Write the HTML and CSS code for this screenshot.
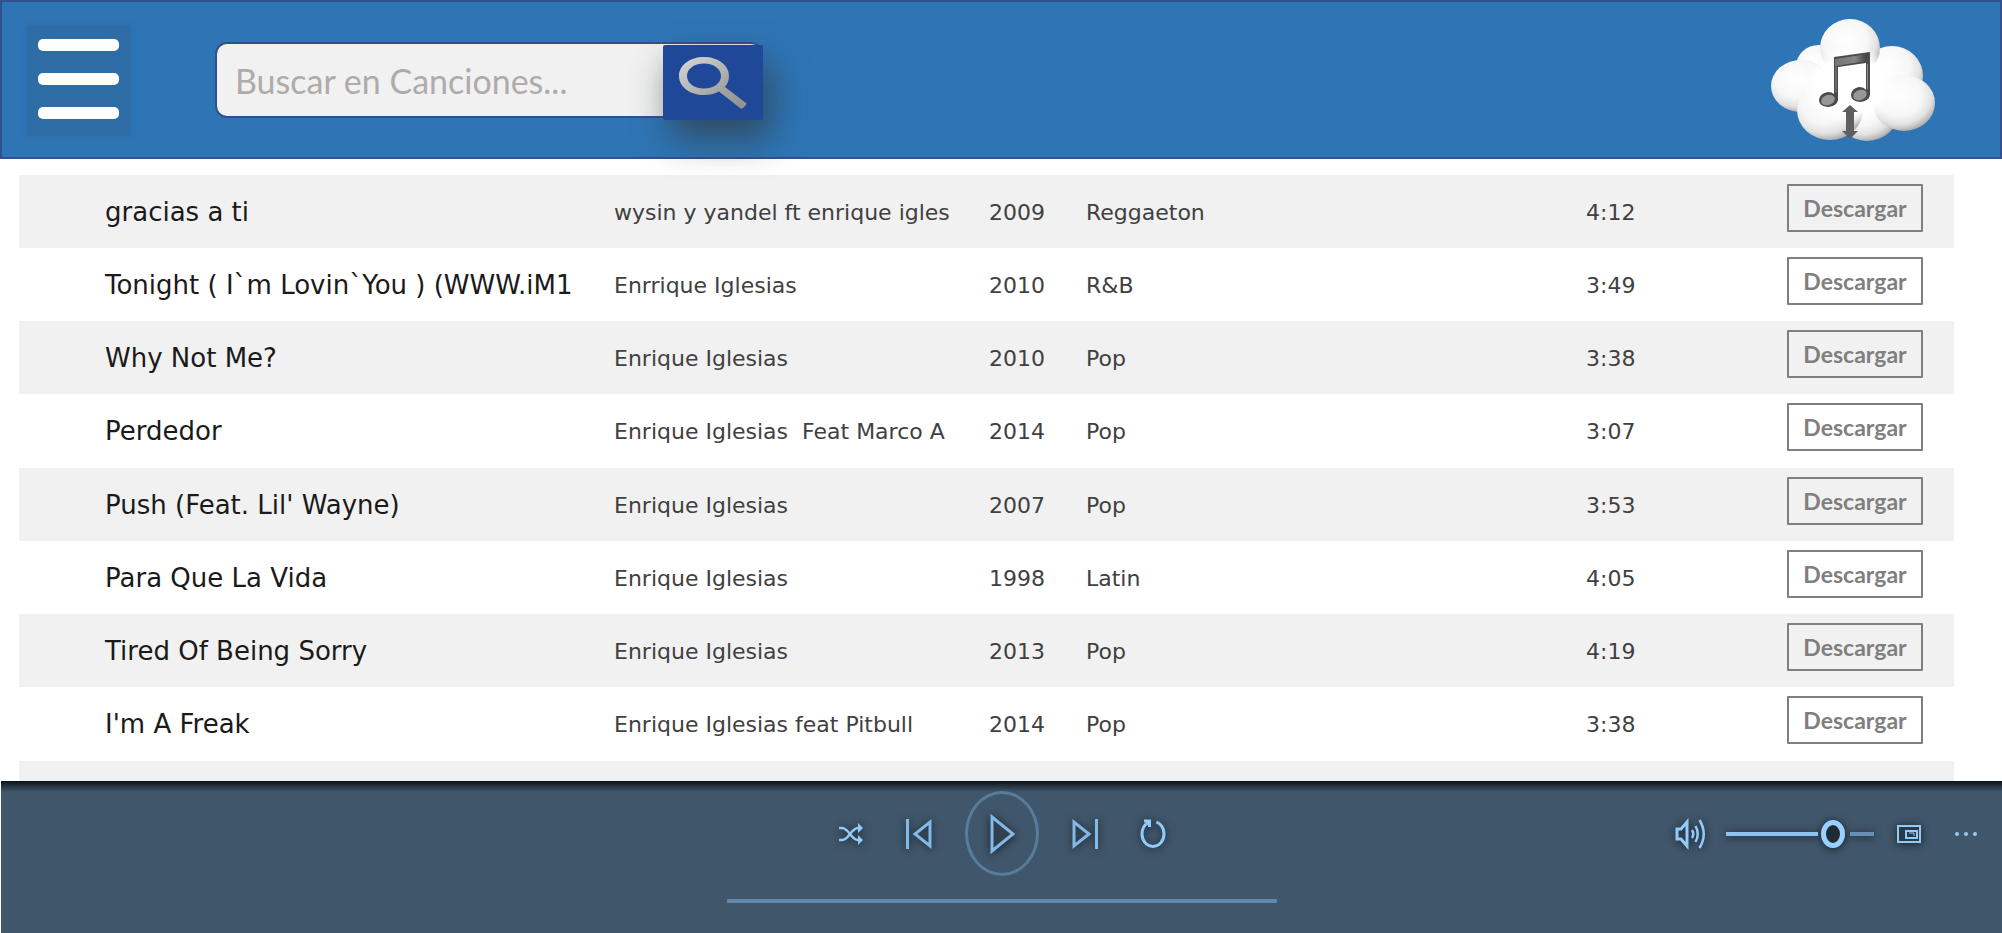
FILE: index.html
```html
<!DOCTYPE html>
<html lang="es">
<head>
<meta charset="utf-8">
<title>Canciones</title>
<link rel="stylesheet" href="styles.css">
</head>
<body>
<header class="topbar">
  <button class="menu" type="button" aria-label="Menú"><span class="bar"></span><span class="bar"></span><span class="bar"></span></button>
  <form class="search" role="search">
    <input class="search-input" type="text" placeholder="Buscar en Canciones..." aria-label="Buscar en Canciones">
    <button class="search-button" type="button" aria-label="Buscar">
      <svg width="70" height="54" viewBox="0 0 70 54">
        <defs><linearGradient id="lens" x1="0" y1="0" x2="1" y2="1"><stop offset="0" stop-color="#d8d8d8"/><stop offset=".6" stop-color="#a6a6a6"/><stop offset="1" stop-color="#8f8f8f"/></linearGradient></defs>
        <path fill="url(#lens)" fill-rule="evenodd" d="M26 1C40 1 51 9 51 20C51 24 49.500 28 47 31L68 47Q69 48 68 49L65 52Q63.500 53 62 52L41 35.500C37 38 31.500 39 26 39C12 39 1 31 1 20C1 9 12 1 26 1ZM26 7.500C16 7.500 9 13 9 20C9 27 16 32.500 26 32.500C36 32.500 43 27 43 20C43 13 36 7.500 26 7.500Z"/>
      </svg>
    </button>
  </form>
  <svg class="logo" width="166" height="124" viewBox="0 0 166 124" role="img" aria-label="Nube de música">
    <defs>
      <radialGradient id="puff" cx=".42" cy=".36" r=".66"><stop offset="0" stop-color="#fff"/><stop offset=".55" stop-color="#f7f7f7"/><stop offset=".8" stop-color="#e2e2e2"/><stop offset="1" stop-color="#aaa"/></radialGradient>
      <radialGradient id="mist"><stop offset="0" stop-color="#fff"/><stop offset=".7" stop-color="#fff"/><stop offset="1" stop-color="#fff" stop-opacity="0"/></radialGradient>
      <linearGradient id="beam" x1="0" y1="0" x2="1" y2="0"><stop offset="0" stop-color="#777"/><stop offset=".6" stop-color="#858585"/><stop offset="1" stop-color="#3c3c3c"/></linearGradient>
    </defs>
    <g fill="url(#puff)">
      <ellipse cx="49" cy="48" rx="23" ry="21"/>
      <ellipse cx="122" cy="58" rx="31" ry="30"/>
      <ellipse cx="31" cy="68" rx="30" ry="26"/>
      <ellipse cx="97" cy="95" rx="31" ry="28"/>
      <ellipse cx="60" cy="92" rx="33" ry="30"/>
      <ellipse cx="134" cy="85" rx="31" ry="28"/>
      <ellipse cx="80" cy="30" rx="30" ry="29"/>
    </g>
    <ellipse cx="80" cy="67" rx="48" ry="40" fill="url(#mist)"/>
    <path d="M64 39L100 34V76H96V45L68 49V83H64Z" fill="#4b4b4b"/>
    <path d="M65 41L98 36L96 43L65 48Z" fill="url(#beam)"/>
    <path d="M66 48V78M97.500 46V72" stroke="#8a8a8a" fill="none"/>
    <path d="M64 76L68 73V82Q67 88 58 89Q49 88 49 82Q50 75 58 74Q62 74 64 76ZM96 72L100 70V77Q99 83 90 84Q81 83 81 77Q82 70 89 69Q94 69 96 72Z" fill="#4b4b4b"/>
    <ellipse cx="58" cy="82" rx="7" ry="5" fill="#979797" transform="rotate(-20 58 82)"/>
    <ellipse cx="90" cy="77" rx="7" ry="5" fill="#979797" transform="rotate(-20 90 77)"/>
    <path d="M80 87L88 94H84V113H88L80 121L72 113H76V94H72Z" fill="#5f5f5f"/>
  </svg>
</header>
<main class="library">
  <table class="songs">
    <tbody>
      <tr><td class="title">gracias a ti</td><td>wysin y yandel ft enrique igles</td><td>2009</td><td>Reggaeton</td><td>4:12</td><td class="action"><button class="download" type="button">Descargar</button></td></tr>
      <tr><td class="title">Tonight ( I`m Lovin`You ) (WWW.iM1</td><td>Enrrique Iglesias</td><td>2010</td><td>R&amp;B</td><td>3:49</td><td class="action"><button class="download" type="button">Descargar</button></td></tr>
      <tr><td class="title">Why Not Me?</td><td>Enrique Iglesias</td><td>2010</td><td>Pop</td><td>3:38</td><td class="action"><button class="download" type="button">Descargar</button></td></tr>
      <tr><td class="title">Perdedor</td><td>Enrique Iglesias&nbsp; Feat Marco A</td><td>2014</td><td>Pop</td><td>3:07</td><td class="action"><button class="download" type="button">Descargar</button></td></tr>
      <tr><td class="title">Push (Feat. Lil' Wayne)</td><td>Enrique Iglesias</td><td>2007</td><td>Pop</td><td>3:53</td><td class="action"><button class="download" type="button">Descargar</button></td></tr>
      <tr><td class="title">Para Que La Vida</td><td>Enrique Iglesias</td><td>1998</td><td>Latin</td><td>4:05</td><td class="action"><button class="download" type="button">Descargar</button></td></tr>
      <tr><td class="title">Tired Of Being Sorry</td><td>Enrique Iglesias</td><td>2013</td><td>Pop</td><td>4:19</td><td class="action"><button class="download" type="button">Descargar</button></td></tr>
      <tr><td class="title">I'm A Freak</td><td>Enrique Iglesias feat Pitbull</td><td>2014</td><td>Pop</td><td>3:38</td><td class="action"><button class="download" type="button">Descargar</button></td></tr>
      <tr><td></td></tr>
    </tbody>
  </table>
</main>
<footer class="player">
  <div class="transport">
    <button class="control" type="button" aria-label="Aleatorio">
      <svg class="glow" width="26" height="24" viewBox="0 0 26 24" fill="none" stroke="#92cbf8" stroke-width="2.500"><path d="M1 6H4C11 6 13 18 20 18H22M1 18H4C11 18 13 6 20 6H22"/><path d="M20 1L25 6L20 11ZM20 13L25 18L20 23Z" fill="#92cbf8" stroke="none"/></svg>
    </button>
    <button class="control" type="button" aria-label="Anterior">
      <svg class="glow" width="28" height="32" viewBox="0 0 28 32" fill="none" stroke="#82b9e6" stroke-width="3"><path d="M2.500 1V31M25 4V28L10 16Z"/></svg>
    </button>
    <button class="play" type="button" aria-label="Reproducir">
      <svg class="glow" width="28" height="42" viewBox="0 0 28 42" fill="#30404e" stroke="#82b9e6" stroke-width="3"><path d="M4 4V38L25 21Z"/></svg>
    </button>
    <button class="control" type="button" aria-label="Siguiente">
      <svg class="glow" width="28" height="32" viewBox="0 0 28 32" fill="none" stroke="#82b9e6" stroke-width="3"><path d="M25.500 1V31M3 4V28L18 16Z"/></svg>
    </button>
    <button class="control" type="button" aria-label="Repetir">
      <svg class="glow" width="26" height="30" viewBox="0 0 26 30" fill="none" stroke="#92cbf8" stroke-width="3"><path d="M16.500 3C21 5 24 9 24 15C24 22 19 27.500 13 27.500S2 22 2 15C2 10 4 6 8.500 3.500M4 2H9.500V8"/></svg>
    </button>
  </div>
  <div class="extras">
    <button class="control" type="button" aria-label="Volumen">
      <svg class="glow" width="32" height="32" viewBox="0 0 32 32" fill="none" stroke="#92cbf8" stroke-width="3"><path d="M2 11H6L12 4V28L6 21H2Z"/><path d="M17 12Q19.500 16 17 20M20.500 8Q25 16 20.500 24M24.500 2Q33 16 24.500 30" stroke-width="2.500"/></svg>
    </button>
    <input class="volume" type="range" min="0" max="100" value="77" aria-label="Nivel de volumen">
    <button class="control" type="button" aria-label="Reproductor en miniatura">
      <svg class="glow" width="26" height="20" viewBox="0 0 26 20" fill="none" stroke="#92cbf8" stroke-width="2"><path d="M2 2H24V18H2Z" fill="#2b3a47"/><path d="M10 7H21V14H10Z"/><path d="M13 9H18V12" stroke-width="1"/></svg>
    </button>
    <button class="control" type="button" aria-label="Más opciones">
      <svg width="24" height="6" viewBox="0 0 24 6" fill="#92cbf8"><circle cx="3" cy="3" r="2"/><circle cx="12" cy="3" r="2"/><circle cx="21" cy="3" r="2"/></svg>
    </button>
  </div>
  <progress class="progress" value="0" max="100" aria-label="Progreso"></progress>
</footer>
</body>
</html>
```

FILE: styles.css
```css
* {
  box-sizing: border-box;
}

body {
  margin: 0;
  height: 100vh;
  display: flex;
  flex-direction: column;
  background: #fff;
  font-family: "DejaVu Sans", sans-serif;
}

button {
  padding: 0;
  border: 0;
  background: none;
  font: inherit;
}

svg {
  display: block;
}

/* Top bar */
.topbar {
  position: relative;
  z-index: 1;
  flex: none;
  display: flex;
  align-items: center;
  padding: 16px 64px 15px 25px;
  border: 2px solid #2f528f;
  background: #2e75b6;
}

.menu {
  display: flex;
  flex-direction: column;
  gap: 22px;
  padding: 14px 11px 17px;
  background: #2d6ca5;
  box-shadow: 0 0 4px #2d6ca5;
}

.bar {
  width: 81px;
  height: 12px;
  border-radius: 5px;
  background: #fff;
}

.search {
  display: flex;
  width: 548px;
  height: 76px;
  margin-left: 85px;
  border: 2px solid #2f528f;
  border-radius: 12px;
  background: #f1f1f1;
}

.search-input {
  flex: 1;
  min-width: 0;
  padding: 0 0 0 18px;
  border: 0;
  background: none;
  font: 34px Lato, sans-serif;
  color: #afabab;
}

.search-input::placeholder {
  color: #afabab;
}

.search-button {
  display: flex;
  align-items: center;
  justify-content: center;
  width: 100px;
  height: 75px;
  margin: 1px -2px 0 0;
  border-radius: 2px;
  background: #1f4899;
  box-shadow: 8px 18px 36px rgba(50, 60, 70, .75);
}

.logo {
  margin-left: auto;
}

/* Song list */
.library {
  flex: 1;
  min-height: 0;
  overflow: hidden;
  padding: 16px 48px 0 19px;
}

.songs,
.songs tbody {
  display: block;
}

.songs tr {
  display: grid;
  grid-template-columns: 595fr 375fr 97fr 500fr 201fr 167fr;
  height: 73px;
}

.songs tr:nth-child(4n) {
  height: 74px;
}

.songs tr:nth-child(odd) {
  background: #f1f1f1;
}

.songs td {
  padding: 24px 0 0;
  font-size: 22px;
  line-height: 28px;
  white-space: nowrap;
  color: #404040;
}

.songs .title {
  padding: 23px 0 0 86px;
  font-size: 26px;
  color: #1a1a1a;
}

.songs .action {
  padding-top: 9px;
}

.download {
  width: 136px;
  height: 48px;
  border: 2px solid #7f7f7f;
  border-radius: 1px;
  font: bold 23px Lato, sans-serif;
  color: #7f7f7f;
}

/* Player */
.player {
  flex: none;
  display: grid;
  grid-template-columns: 1fr auto 1fr;
  grid-template-rows: 85px auto;
  row-gap: 23px;
  align-items: center;
  height: 152px;
  margin-left: 1px;
  padding: 10px 14px 0;
  background: linear-gradient(#0b1117, #2a3946 6px, #40566a 11px);
}

.transport {
  grid-column: 2;
  display: flex;
  align-items: center;
  gap: 24px;
}

.control {
  display: flex;
  align-items: center;
  justify-content: center;
  width: 44px;
  height: 44px;
}

.play {
  display: flex;
  align-items: center;
  justify-content: center;
  width: 74px;
  height: 85px;
  border: 3px solid #587c9b;
  border-radius: 50%;
}

.glow {
  filter: drop-shadow(0 1px 4px rgba(10, 18, 25, .8));
}

.extras {
  justify-self: end;
  display: flex;
  align-items: center;
  gap: 13px;
}

.volume {
  appearance: none;
  width: 148px;
  height: 30px;
  margin: 0;
  background: linear-gradient(90deg, #8cc4f0 62%, transparent 62%, transparent 84%, #6690b3 84%) center / 100% 4px no-repeat;
  filter: drop-shadow(0 1px 4px rgba(10, 18, 25, .8));
}

.volume::-webkit-slider-thumb {
  appearance: none;
  width: 24px;
  height: 28px;
  border: 5px solid #98d0ff;
  border-radius: 50%;
  background: #1e2a34;
}

.progress {
  appearance: none;
  grid-column: 1 / -1;
  justify-self: center;
  align-self: start;
  width: 550px;
  height: 4px;
  border: 0;
  background: #5f88aa;
}

.progress::-webkit-progress-bar {
  background: #5f88aa;
}
```
